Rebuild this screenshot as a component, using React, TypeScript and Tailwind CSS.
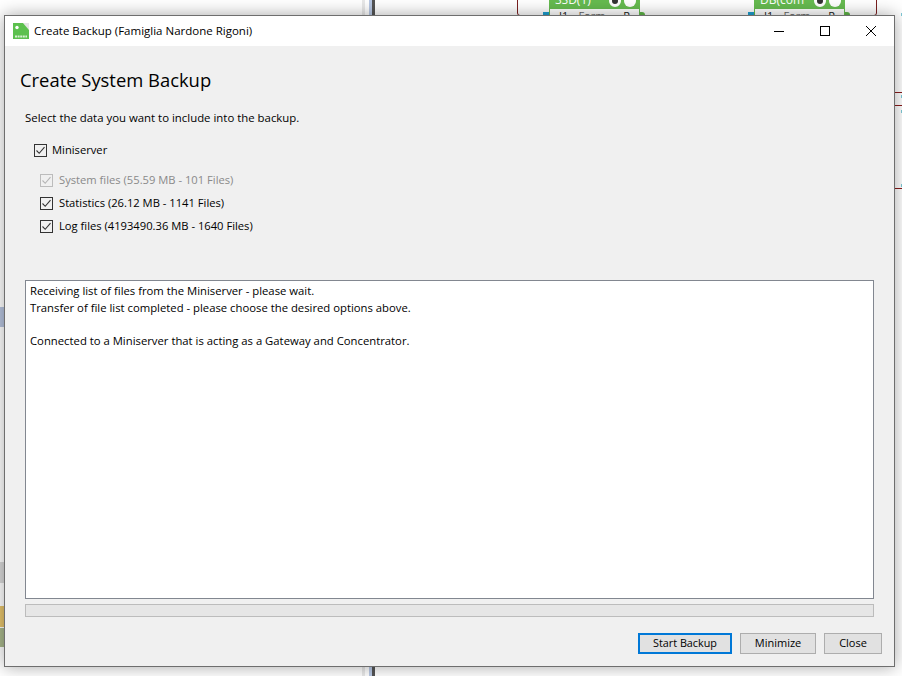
const uiFont = "font-['Open_Sans','Noto_Sans',sans-serif]";

function CheckBox({ disabled = false }: { disabled?: boolean }) {
  const color = disabled ? "#b4b4b4" : "#333333";
  return (
    <span
      className={`flex h-[13px] w-[13px] shrink-0 items-center justify-center border bg-transparent ${
        disabled ? "border-[#bcbcbc]" : "border-[#333333]"
      }`}
    >
      <svg width="11" height="11" viewBox="0 0 11 11" fill="none">
        <path d="M1.5 5.5 L4.2 8.3 L9.5 2.2" stroke={color} strokeWidth="1.1" />
      </svg>
    </span>
  );
}

function Option({ label, disabled = false, className = "" }: { label: string; disabled?: boolean; className?: string }) {
  return (
    <div className={`flex items-center leading-[16px] text-[11.2px] ${disabled ? "text-[#8a8a8a]" : "text-black"} ${className}`}>
      <CheckBox disabled={disabled} />
      <span>{label}</span>
    </div>
  );
}

function WinButton({ label, primary = false, className = "" }: { label: string; primary?: boolean; className?: string }) {
  return (
    <button
      className={`flex h-[21px] items-center justify-center bg-[#e1e1e1] text-black ${
        primary ? "border-2 border-[#0078d7]" : "border border-[#adadad]"
      } ${className}`}
    >
      {label}
    </button>
  );
}

function Block({ left, name }: { left: string; name: string }) {
  return (
    <div className={`absolute top-0 w-[91px] ${left}`}>
      <div className="flex h-[8px] justify-between overflow-hidden bg-[#66bb50] pl-[6px] pr-[4px] text-[12px] leading-[12px] text-white">
        <span className="-mt-[6px]">{name}</span>
        <span className="-mt-[5px] flex gap-[3px]">
          <span className="h-[12px] w-[12px] rounded-full border-[3px] border-white bg-[#333]" />
          <span className="h-[12px] w-[12px] rounded-full bg-white" />
        </span>
      </div>
      <div className="flex h-[7px] overflow-hidden border-x border-t border-[#66bb50] bg-white px-[9px] text-[11px] leading-[13px] text-[#666]">
        <span className="text-[#222]">I1</span>
        <span className="ml-[10px]">Form</span>
        <span className="ml-auto text-[#222]">R</span>
      </div>
      <span className="absolute left-[-6px] top-[12px] h-[3px] w-[6px] bg-[#1f9fd0]" />
      <span className="absolute right-[-5px] top-[12px] h-[3px] w-[5px] rounded-tr-[3px] bg-[#5fb548]" />
    </div>
  );
}

function Backdrop() {
  return (
    <>
      <div className="absolute left-[362px] top-0 h-full w-[3px] bg-[#e8e8e8]" />
      <div className="absolute left-[369px] top-0 h-full w-[3px] bg-[#b8c8e4]" />
      <div className="absolute left-[372px] top-0 h-full w-[3px] bg-[#555555]" />
      {/* block outline behind the window */}
      <div className="absolute left-[517px] top-[-10px] h-[26px] w-[360px] rounded-b-[3px] border border-[#7a1f1f]" />
      <Block left="left-[549px]" name="SSD(1)" />
      <Block left="left-[754px]" name="DB(com" />
      {/* wires to the right of the window */}
      <div className="absolute right-0 top-[92px] h-px w-[8px] bg-[#8a1c1c]" />
      <div className="absolute right-0 top-[105px] h-px w-[8px] bg-[#8a1c1c]" />
      <div className="absolute right-0 top-[188px] h-px w-[8px] bg-[#8a1c1c]" />
      <div className="absolute right-0 top-[13px] h-[3px] w-px bg-[#7fcad8]" />
      <div className="absolute right-0 top-[95px] h-[3px] w-px bg-[#7fcad8]" />
      <div className="absolute right-0 top-[110px] h-[3px] w-px bg-[#7fcad8]" />
      <div className="absolute right-0 top-[184px] h-[3px] w-px bg-[#7fcad8]" />
      {/* rows peeking out at the left */}
      <div className="absolute left-0 top-[307px] h-[20px] w-[4px] bg-[#b7c3de]" />
      <div className="absolute left-0 top-[562px] h-[21px] w-[4px] bg-[#d9d9d9]" />
      <div className="absolute left-0 top-[606px] h-[21px] w-[4px] bg-[#e6c46c]" />
      <div className="absolute left-0 top-[628px] h-[19px] w-[4px] bg-[#a9b88c]" />
    </>
  );
}

export default function App() {
  return (
    <div className={`relative h-[676px] w-[902px] overflow-hidden bg-white text-[11.3px] ${uiFont}`}>
      <Backdrop />
      {/* the dialog window */}
      <div className="absolute left-[4px] top-[15px] flex h-[652px] w-[891px] flex-col border border-[#6e6e6e] bg-[#f0f0f0] shadow-[0_0_16px_rgba(0,0,0,0.35)]">
        <header className="flex h-[30px] shrink-0 items-center bg-white pl-[8px]">
          <svg width="16" height="16" viewBox="0 0 16 16">
            <path d="M10 0 L16 7 V0 Z" fill="#e4e4e4" />
            <path d="M0 0 H10 L16 7 V16 H0 Z" fill="#5cc04e" />
            <circle cx="4" cy="4.5" r="1.7" fill="#fff" />
            <path d="M2 13.5 H14" stroke="#d8f0d4" strokeWidth="2" strokeDasharray="2 0.6" />
          </svg>
          <span className="ml-[5px] text-[11.5px] text-black">Create Backup (Famiglia Nardone Rigoni)</span>
          <div className="ml-auto flex h-full">
            <span className="flex w-[46px] items-center justify-center">
              <svg width="10" height="10" viewBox="0 0 10 10">
                <path d="M0 5.5 H10" stroke="#000" />
              </svg>
            </span>
            <span className="flex w-[46px] items-center justify-center">
              <svg width="10" height="10" viewBox="0 0 10 10" fill="none">
                <rect x="0.5" y="0.5" width="9" height="9" stroke="#000" />
              </svg>
            </span>
            <span className="flex w-[46px] items-center justify-center">
              <svg width="10" height="10" viewBox="0 0 10 10" fill="none">
                <path d="M0 0 L10 10 M10 0 L0 10" stroke="#000" />
              </svg>
            </span>
          </div>
        </header>

        <div className="flex min-h-0 flex-1 flex-col px-[20px] pb-[12px]">
          <h1 className="-ml-[5px] mt-[20px] text-[18.4px] leading-[28px] text-black">Create System Backup</h1>
          <p className="mt-[16px] text-[11.4px] leading-[16px] text-black">Select the data you want to include into the backup.</p>
          <Option label="Miniserver" className="ml-[9px] mt-[16px] gap-[5px]" />
          <Option label="System files (55.59 MB - 101 Files)" disabled className="ml-[15px] mt-[14px] gap-[6px]" />
          <Option label="Statistics (26.12 MB - 1141 Files)" className="ml-[15px] mt-[7px] gap-[6px]" />
          <Option label="Log files (4193490.36 MB - 1640 Files)" className="ml-[15px] mt-[7px] gap-[6px]" />

          <div className="mt-[46px] flex h-[319px] flex-col border border-[#828790] bg-white px-[4px] pb-[3px] pt-[1px] leading-[17px] text-black">
            <span>Receiving list of files from the Miniserver - please wait.</span>
            <span>Transfer of file list completed - please choose the desired options above.</span>
            <span className="mt-[16px]">Connected to a Miniserver that is acting as a Gateway and Concentrator.</span>
          </div>
          <div className="mt-[5px] h-[13px] border border-[#bcbcbc] bg-[#e6e6e6]" />

          <div className="mr-[-8px] mt-auto flex justify-end gap-[8px]">
            <WinButton label="Start Backup" primary className="w-[94px] text-[10.8px]" />
            <WinButton label="Minimize" className="w-[76px] text-[11px]" />
            <WinButton label="Close" className="w-[58px] text-[11px]" />
          </div>
        </div>
      </div>
    </div>
  );
}
